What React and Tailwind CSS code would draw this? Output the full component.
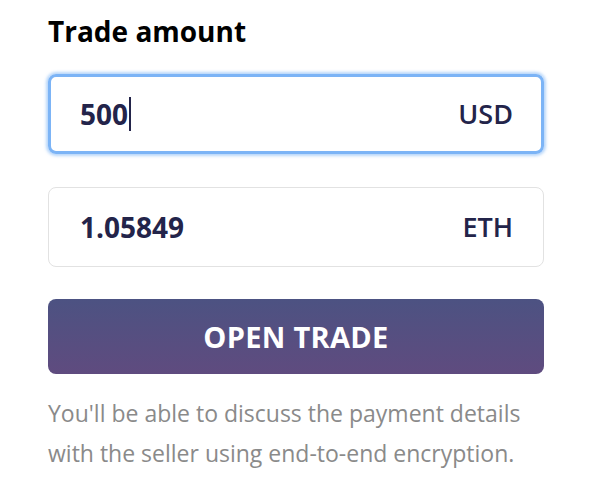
export default function App() {
  return (
    <div className="min-h-screen w-[600px] bg-white" style={{ fontFamily: '"Open Sans", "Noto Sans", sans-serif' }}>
      <div className="pl-[48px] pt-[13px] w-[544px]">
        {/* Label */}
        <h2 className="text-[28px] leading-[36px] font-bold text-black">Trade amount</h2>

        {/* Fiat amount (focused) */}
        <div className="mt-[25px] h-[80px] flex items-center justify-between rounded-[8px] border-[3px] border-[#7cb4f6] shadow-[0_0_3px_2px_rgba(124,180,246,0.55)] pl-[29px] pr-[28px]">
          <div className="flex items-center">
            <span className="text-[28px] font-bold text-[#23244a]">500</span>
            <span className="ml-[1px] w-[2px] h-[34px] bg-[#23244a]" />
          </div>
          <span className="text-[27px] font-semibold text-[#23244a]">USD</span>
        </div>

        {/* Crypto amount */}
        <div className="mt-[33px] h-[80px] flex items-center justify-between rounded-[8px] border-[1.5px] border-[#e2e2e2] pl-[31px] pr-[30px]">
          <span className="text-[28px] font-bold text-[#23244a]">1.05849</span>
          <span className="text-[27px] font-semibold text-[#23244a]">ETH</span>
        </div>

        <button className="mt-[32px] w-full h-[75px] rounded-[8px] bg-gradient-to-b from-[#4c5282] to-[#5f4b7f] text-white text-[29px] font-bold tracking-[0.3px]">
          OPEN TRADE
        </button>

        <p className="mt-[19px] text-[23px] leading-[40px] text-[#8a8a8a]">
          You'll be able to discuss the payment details with the seller using end-to-end encryption.
        </p>
      </div>
    </div>
  )
}
